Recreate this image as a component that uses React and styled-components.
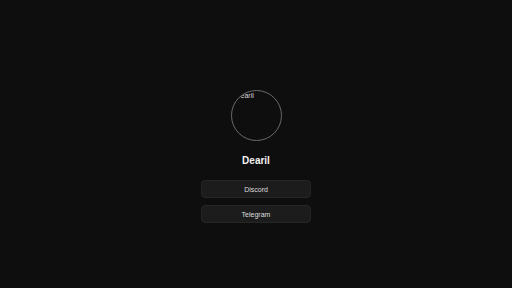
import React from 'react'
import styled, { createGlobalStyle } from 'styled-components'

const GlobalStyle = createGlobalStyle`
    html, body {
        margin: 0;
        padding: 0;
        background: #0e0e0e;
        font-family: "Liberation Sans", Arial, sans-serif;
    }
`

const Page = styled.div`
    width: 512px;
    height: 288px;
    display: flex;
    flex-direction: column;
    align-items: center;
    padding-top: 90px;
    box-sizing: border-box;
`

const Avatar = styled.div`
    width: 51px;
    height: 51px;
    border: 1.5px solid #6a6a6a;
    border-radius: 50%;
    overflow: hidden;
    box-sizing: border-box;
    color: #d8d8d8;
    font-size: 7px;
    line-height: 8px;
    padding: 1px 0 0 4px;
`

const Name = styled.h1`
    margin: 13px 0 0;
    font-size: 10px;
    font-weight: bold;
    color: #f2f2f2;
    line-height: 14px;
`

const Links = styled.div`
    display: flex;
    flex-direction: column;
    gap: 7px;
    margin-top: 12px;
`

const LinkButton = styled.a`
    width: 110px;
    height: 18px;
    box-sizing: border-box;
    display: flex;
    align-items: center;
    justify-content: center;
    background: #1c1c1c;
    border: 1px solid #262626;
    border-radius: 4px;
    color: #dcdcdc;
    font-size: 7px;
    text-decoration: none;
`

const links = ['Discord', 'Telegram']

function App() {
    return (
        <>
            <GlobalStyle />
            <Page>
                <Avatar>Dearil</Avatar>
                <Name>Dearil</Name>
                <Links>
                    {links.map((l) => (
                        <LinkButton key={l} href="#">{l}</LinkButton>
                    ))}
                </Links>
            </Page>
        </>
    )
}

export default App
